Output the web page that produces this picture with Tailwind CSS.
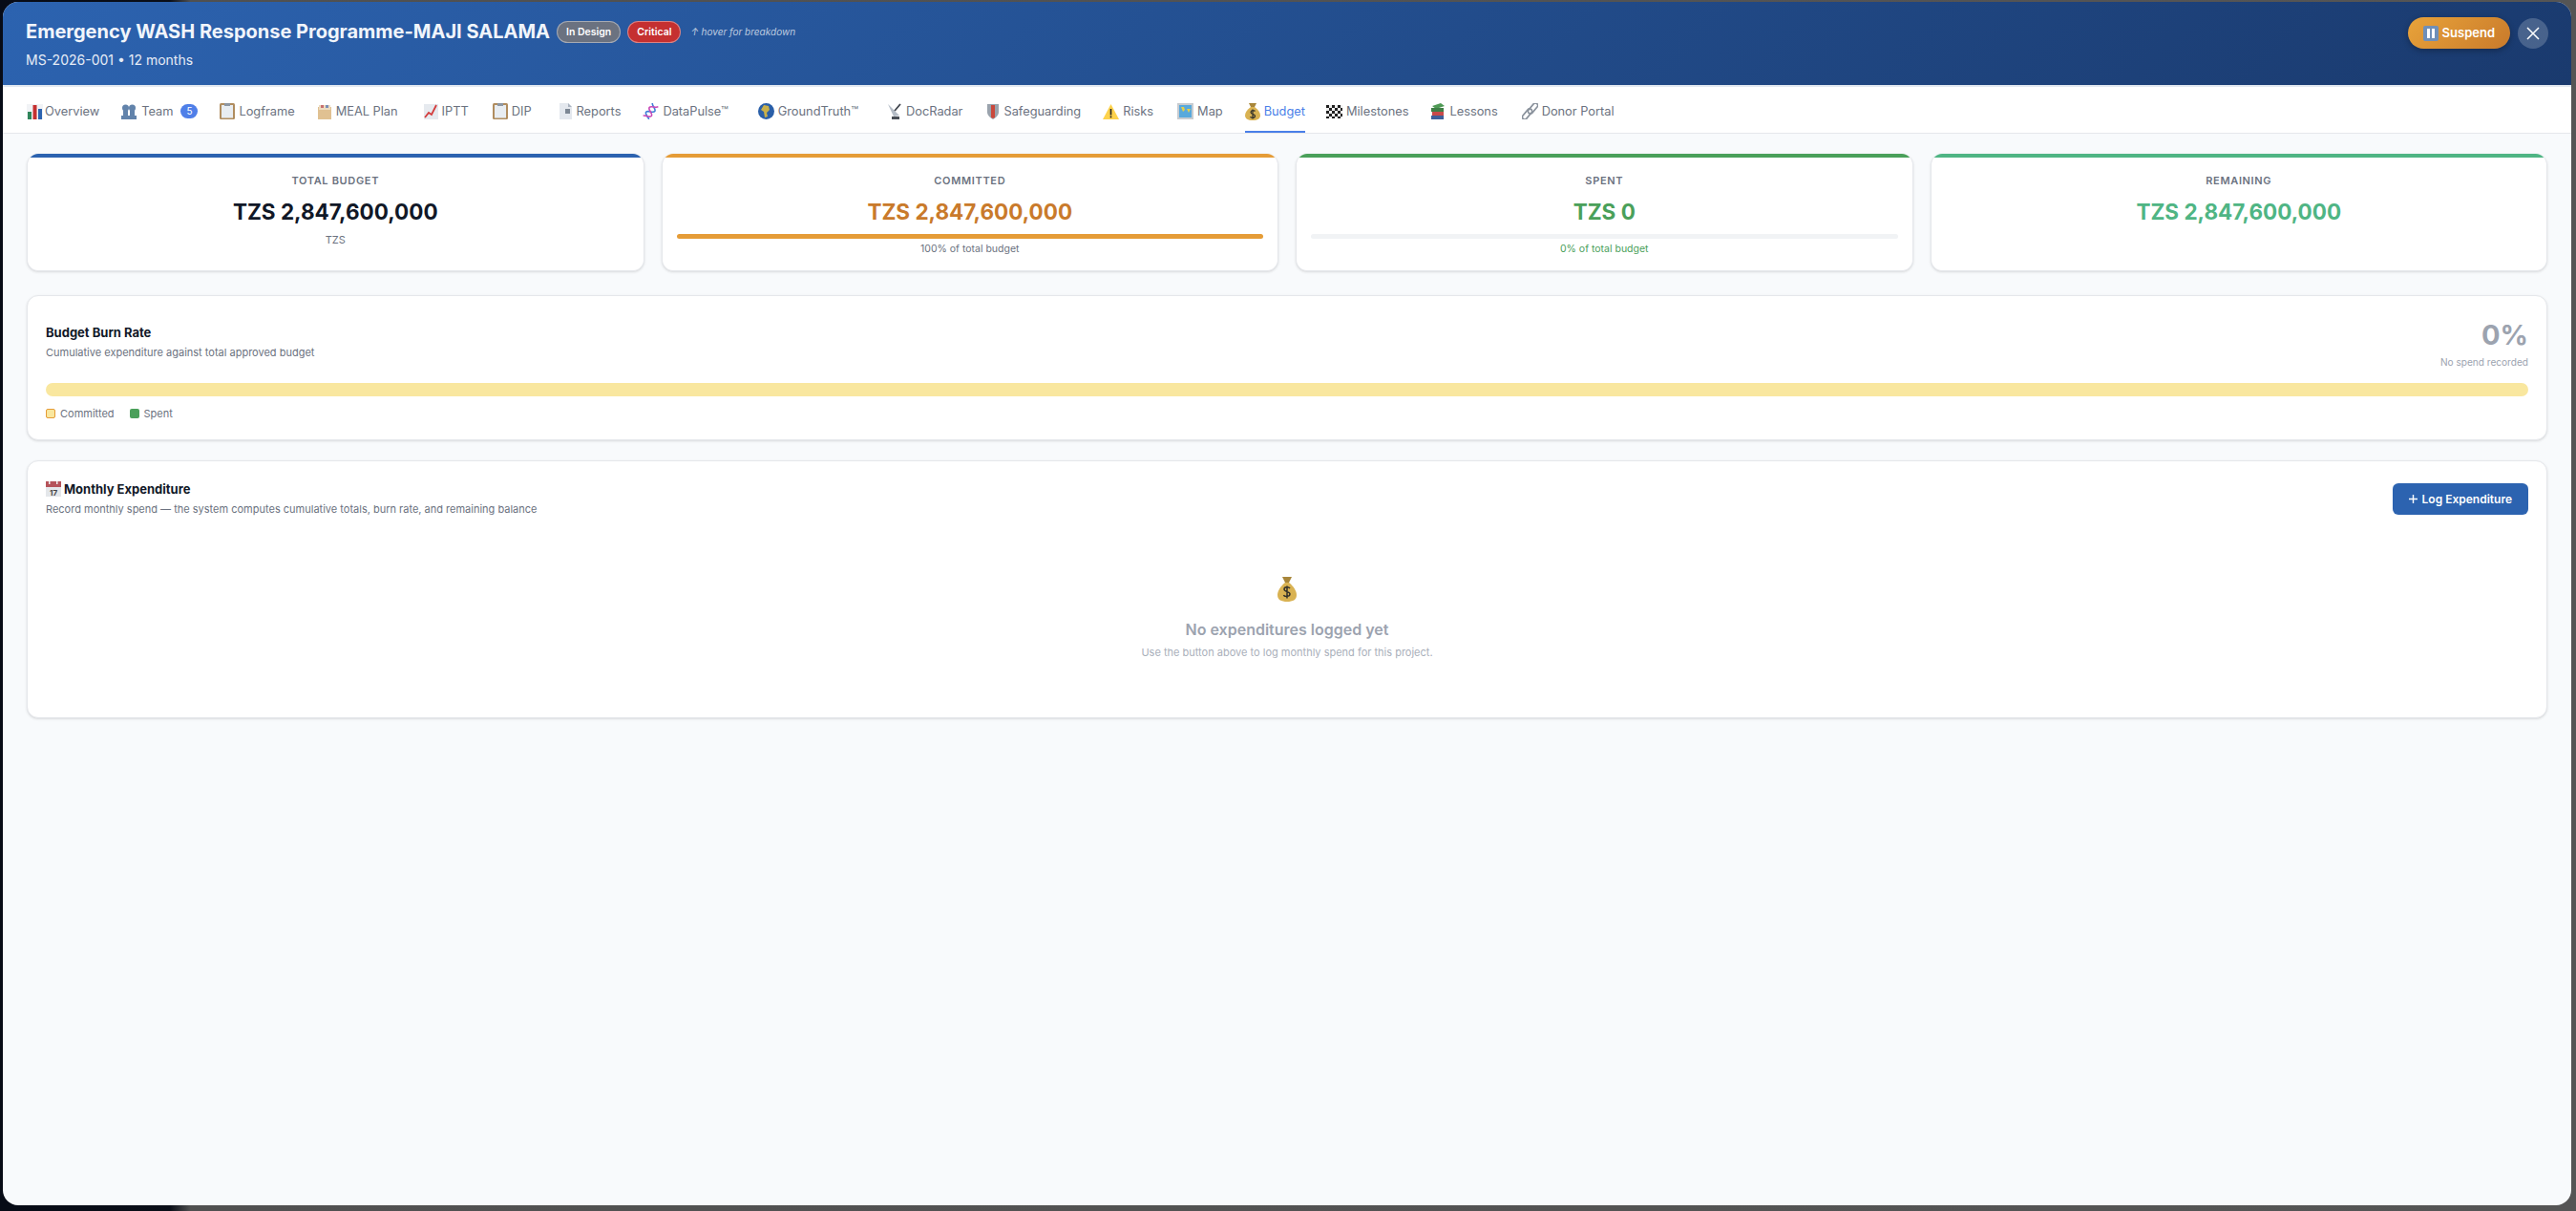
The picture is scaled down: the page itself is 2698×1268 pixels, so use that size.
<!DOCTYPE html>
<html lang="en">
  <head>
    <meta charset="UTF-8" />
    <title>Budget</title>
    <script src="https://cdn.jsdelivr.net/npm/@tailwindcss/browser@4"></script>
  </head>
  <body class="h-[1268px] w-[2698px] overflow-hidden bg-[linear-gradient(90deg,#070b16_0%,#0a0e18_6.6%,#505050_7.4%,#555555_100%)] font-['Inter',sans-serif]">
    <div class="ml-[3px] mt-[2px] flex h-[1260px] w-[2690px] flex-col overflow-hidden rounded-[16px] bg-[#f8fafc]">
      <!-- header -->
      <header class="flex h-[87px] shrink-0 items-start justify-between bg-[linear-gradient(135deg,#2c63b0_0%,#1a3a6e_100%)] pl-[24px] pr-[24px]">
        <div class="pt-[17px]">
          <div class="flex items-center">
            <h1 class="text-[20px] font-bold leading-[28px] text-[#f1f5fb]">Emergency WASH Response Programme-MAJI SALAMA</h1>
            <span class="ml-[7px] rounded-full border border-white/40 bg-[#6b7280] px-[9px] py-[3px] text-[10.5px] font-semibold leading-[15px] text-white">In Design</span>
            <span class="ml-[7px] rounded-full border border-white/40 bg-[#c53030] px-[9px] py-[3px] text-[10.5px] font-semibold leading-[15px] text-white">Critical</span>
            <span class="ml-[10px] text-[10px] italic text-white/70">↑ hover for breakdown</span>
          </div>
          <p class="mt-[6px] text-[14px] leading-[20px] text-[#e6ecf6]">MS-2026-001 • 12 months</p>
        </div>
        <div class="flex items-center gap-[8px] pt-[16px]">
          <button class="flex h-[33px] items-center gap-[4px] rounded-full bg-[linear-gradient(135deg,#e8a33a,#c97a2b)] px-[16px] text-[13px] font-semibold text-white shadow-[0_2px_6px_rgba(0,0,0,0.3)]">
            <svg class="h-[16px] w-[16px]" viewBox="0 0 16 16"><rect width="16" height="16" rx="2" fill="#6f8fb8"/><rect x="4" y="3" width="3" height="10" fill="#fff"/><rect x="9" y="3" width="3" height="10" fill="#fff"/></svg>
            Suspend
          </button>
          <button class="flex h-[32px] w-[32px] items-center justify-center rounded-full bg-white/20">
            <svg class="h-[14px] w-[14px]" viewBox="0 0 14 14" fill="none" stroke="#fff" stroke-width="1.5"><path d="M1 1l12 12M13 1L1 13"/></svg>
          </button>
        </div>
      </header>

      <!-- tabs -->
      <nav class="flex h-[51px] shrink-0 items-stretch gap-[25px] border-b border-b-[#e5e7eb] border-t-[2px] border-t-[#e2e8f0] bg-white pl-[25px] text-[12.8px] text-[#6b7280]">
        <a class="flex items-center gap-[2px] pt-[3px]">
          <svg class="h-[16px] w-[17px]" viewBox="0 0 17 16"><rect width="17" height="16" fill="#f1f3f6"/><rect x="1" y="8" width="4" height="8" fill="#2f855a"/><rect x="6.5" y="1" width="4" height="15" fill="#c53030"/><rect x="12" y="5" width="4" height="11" fill="#2c63b0"/></svg>
          Overview
        </a>
        <a class="ml-[-3px] flex items-center gap-[4px] pt-[3px]">
          <svg class="h-[16px] w-[18px]" viewBox="0 0 18 16" fill="#6283ab"><circle cx="5.5" cy="4" r="3.5"/><circle cx="12.5" cy="4" r="3.5"/><path d="M3 7h5v6H3zM10 7h5v6h-5zM1 12h16v4H1z"/></svg>
          Team
          <span class="ml-[4px] flex h-[15px] w-[18px] items-center justify-center rounded-full bg-[#4f7fe8] text-[10px] text-white">5</span>
        </a>
        <a class="ml-[-2px] flex items-center gap-[4px] pt-[3px]">
          <svg class="h-[17px] w-[16px]" viewBox="0 0 16 17"><rect width="16" height="17" rx="1.5" fill="#b08d5f"/><rect x="2" y="2" width="12" height="13.5" fill="#e8edf2"/><rect x="5" y="0" width="6" height="3" fill="#8d97a3"/></svg>
          Logframe
        </a>
        <a class="ml-[-2px] flex items-center gap-[4px] pt-[3px]">
          <svg class="h-[16px] w-[16px]" viewBox="0 0 16 16"><path d="M1 3h14v13H1z" fill="#e0c192"/><rect x="2" y="1" width="12" height="5" fill="#eddcc0"/><rect x="4" y="1" width="3" height="3" fill="#c87070"/><rect x="9" y="1" width="3" height="3" fill="#7a8fb8"/></svg>
          MEAL Plan
        </a>
        <a class="ml-[2px] flex items-center gap-[4px] pt-[3px]">
          <svg class="h-[16px] w-[15px]" viewBox="0 0 15 16"><rect width="15" height="16" fill="#e6eaef"/><path d="M1 14l4-5 3 2 5-10" fill="none" stroke="#d33c3c" stroke-width="1.8"/></svg>
          IPTT
        </a>
        <a class="flex items-center gap-[4px] pt-[3px]">
          <svg class="h-[17px] w-[16px]" viewBox="0 0 16 17"><rect width="16" height="17" rx="1.5" fill="#b08d5f"/><rect x="2" y="2" width="12" height="13.5" fill="#e8edf2"/><rect x="5" y="0" width="6" height="3" fill="#8d97a3"/></svg>
          DIP
        </a>
        <a class="ml-[3px] flex items-center gap-[4px] pt-[3px]">
          <svg class="h-[17px] w-[15px]" viewBox="0 0 15 17"><path d="M1 0h9l4 4v13H1z" fill="#e4e8ee"/><path d="M10 0l4 4h-4z" fill="#aab3bf"/><rect x="7" y="6" width="5" height="5" fill="#7d8794"/></svg>
          Reports
        </a>
        <a class="ml-[-2px] flex items-center gap-[4px] pt-[3px]">
          <svg class="h-[17px] w-[17px]" viewBox="0 0 17 17" fill="none" stroke-width="1.6"><g transform="rotate(35 8.5 8.5)"><path d="M5 0C5 3 12 3 12 6S5 9 5 12s7 3 7 5" stroke="#3f7fd8"/><path d="M12 0c0 3-7 3-7 6s7 3 7 6-7 3-7 5" stroke="#c84ab8"/></g></svg>
          DataPulse™
        </a>
        <a class="ml-[6px] flex items-center gap-[4px] pt-[3px]">
          <svg class="h-[17px] w-[17px]" viewBox="0 0 17 17"><circle cx="8.5" cy="8.5" r="8.5" fill="#2a5fa8"/><path d="M6 2l5 1 1 4-3 3 1 4-3 1-1-6-3-2z" fill="#c9b04a"/></svg>
          GroundTruth™
        </a>
        <a class="ml-[4px] flex items-center gap-[4px] pt-[3px]">
          <svg class="h-[17px] w-[17px]" viewBox="0 0 17 17" fill="none"><path d="M2 1l12 12-6 1z" fill="#b4bcc6"/><path d="M15 1L9 8" stroke="#3f444c" stroke-width="1.8"/><path d="M6 14h8v3H6z" fill="#4a4f57"/></svg>
          DocRadar
        </a>
        <a class="flex items-center gap-[4px] pt-[3px]">
          <svg class="h-[17px] w-[14px]" viewBox="0 0 14 17"><path d="M1 1h12v8c0 4-3 6-6 8-3-2-6-4-6-8z" fill="#9aa3ad"/><path d="M5 2h4v13l-2 1-2-1z" fill="#c9483c"/></svg>
          Safeguarding
        </a>
        <a class="ml-[-2px] flex items-center gap-[4px] pt-[3px]">
          <svg class="h-[16px] w-[17px]" viewBox="0 0 17 16"><path d="M8.5 0L17 16H0z" fill="#fdd24c"/><rect x="7.7" y="5" width="1.6" height="6.5" fill="#222"/><rect x="7.7" y="12.5" width="1.6" height="1.8" fill="#222"/></svg>
          Risks
        </a>
        <a class="flex items-center gap-[4px] pt-[3px]">
          <svg class="h-[17px] w-[17px]" viewBox="0 0 17 17"><rect width="17" height="17" fill="#c8ccd0"/><rect x="2" y="2" width="13" height="13" fill="#58a9dc"/><path d="M4 4h3l1 3-2 2zM10 6h4l-2 4z" fill="#e4cf4a"/></svg>
          Map
        </a>
        <a class="relative ml-[-2px] flex items-center gap-[4px] pt-[3px] text-[#4a7fe8] after:absolute after:bottom-0 after:left-0 after:h-[2px] after:w-full after:bg-[#4a7fe8]">
          <svg class="h-[18px] w-[16px]" viewBox="0 0 16 18"><path d="M4 0h8l-2 4H6z" fill="#a8863a"/><path d="M6 4h4c4 3 6 6 6 9 0 3-3 5-8 5s-8-2-8-5c0-3 2-6 6-9z" fill="#d9b252"/><path d="M10.5 8.5C10 7.5 6 7 6 9.5s4.5 1.5 4.5 4-4.500 2-5 .8M8 6.5v10" fill="none" stroke="#33312a" stroke-width="1.2"/></svg>
          Budget
        </a>
        <a class="ml-[-3px] flex items-center gap-[4px] pt-[3px]">
          <svg class="h-[14px] w-[17px]" viewBox="0 0 17 14"><rect width="17" height="14" fill="#eee"/><path d="M0 0h3v3H0zM6 0h3v3H6zM12 0h3v3h-3zM3 3h3v3H3zM9 3h3v3H9zM15 3h2v3h-2zM0 6h3v3H0zM6 6h3v3H6zM12 6h3v3h-3zM3 9h3v3H3zM9 9h3v3H9zM15 9h2v3h-2zM0 12h3v2H0zM6 12h3v2H6zM12 12h3v2h-3z" fill="#222"/></svg>
          Milestones
        </a>
        <a class="ml-[-2px] flex items-center gap-[4px] pt-[3px]">
          <svg class="h-[17px] w-[16px]" viewBox="0 0 16 17"><path d="M2 3l9-3 4 3-9 3z" fill="#4f9a55"/><rect x="1" y="5" width="13" height="4" fill="#3f7f46"/><rect x="2" y="9" width="12" height="4" fill="#c84a4a"/><rect x="1" y="13" width="13" height="4" fill="#3f5f9a"/></svg>
          Lessons
        </a>
        <a class="flex items-center gap-[4px] pt-[3px]">
          <svg class="h-[17px] w-[17px]" viewBox="0 0 17 17" fill="none" stroke="#8a929c" stroke-width="1.7"><rect x="-2.5" y="-6.5" width="5" height="13" rx="2.5" transform="translate(11.5 5.5) rotate(40)"/><rect x="-2.5" y="-6.5" width="5" height="13" rx="2.5" transform="translate(5.5 11.5) rotate(40)"/></svg>
          Donor Portal
        </a>
      </nav>

      <!-- content -->
      <main class="flex flex-col px-[25px] pt-[21px]">
        <div class="grid grid-cols-4 gap-[18px]">
          <div class="relative h-[123px] overflow-hidden rounded-[12px] border border-t-0 border-[#e5e7eb] bg-white pt-[20px] text-center shadow-sm before:absolute before:inset-x-0 before:top-0 before:h-[4px] before:bg-[#2c63b0]">
            <p class="text-[11px] font-semibold leading-[16px] tracking-[0.06em] text-[#6b7280]">TOTAL BUDGET</p>
            <p class="mt-[9px] text-[22.5px] font-bold leading-[32px] text-[#111827]">TZS 2,847,600,000</p>
            <p class="mt-[5px] text-[11px] leading-[16px] text-[#6b7280]">TZS</p>
          </div>
          <div class="relative h-[123px] overflow-hidden rounded-[12px] border border-t-0 border-[#e5e7eb] bg-white px-[15px] pt-[20px] text-center shadow-sm before:absolute before:inset-x-0 before:top-0 before:h-[4px] before:bg-[#e59c37]">
            <p class="text-[11px] font-semibold leading-[16px] tracking-[0.06em] text-[#6b7280]">COMMITTED</p>
            <p class="mt-[9px] text-[22.5px] font-bold leading-[32px] text-[#c97a2b]">TZS 2,847,600,000</p>
            <div class="mt-[7px] h-[5px] rounded-full bg-[#e59c37]"></div>
            <p class="mt-[3px] text-[10.5px] leading-[15px] text-[#6b7280]">100% of total budget</p>
          </div>
          <div class="relative h-[123px] overflow-hidden rounded-[12px] border border-t-0 border-[#e5e7eb] bg-white px-[15px] pt-[20px] text-center shadow-sm before:absolute before:inset-x-0 before:top-0 before:h-[4px] before:bg-[#4aa05a]">
            <p class="text-[11px] font-semibold leading-[16px] tracking-[0.06em] text-[#6b7280]">SPENT</p>
            <p class="mt-[9px] text-[22.5px] font-bold leading-[32px] text-[#4aa05a]">TZS 0</p>
            <div class="mt-[7px] h-[5px] rounded-full bg-[#f1f3f5]"></div>
            <p class="mt-[3px] text-[10.5px] leading-[15px] text-[#4aa05a]">0% of total budget</p>
          </div>
          <div class="relative h-[123px] overflow-hidden rounded-[12px] border border-t-0 border-[#e5e7eb] bg-white pt-[20px] text-center shadow-sm before:absolute before:inset-x-0 before:top-0 before:h-[4px] before:bg-[#4fb584]">
            <p class="text-[11px] font-semibold leading-[16px] tracking-[0.06em] text-[#6b7280]">REMAINING</p>
            <p class="mt-[9px] text-[22.5px] font-bold leading-[32px] text-[#4fb584]">TZS 2,847,600,000</p>
          </div>
        </div>

        <section class="mt-[25px] h-[152px] rounded-[12px] border border-[#e5e7eb] bg-white px-[19px] pt-[25px] shadow-sm">
          <div class="flex items-start justify-between">
            <div class="pt-[3px]">
              <h2 class="text-[13px] font-bold leading-[20px] text-[#111827]">Budget Burn Rate</h2>
              <p class="mt-[3px] text-[11px] leading-[16px] text-[#6b7280]">Cumulative expenditure against total approved budget</p>
            </div>
            <div class="text-right">
              <p class="text-[29px] font-bold leading-[32px] text-[#9ca3af]">0%</p>
              <p class="mt-[4px] text-[10.1px] leading-[16px] text-[#9ca3af]">No spend recorded</p>
            </div>
          </div>
          <div class="mt-[14px] h-[14px] rounded-full bg-[#f9e79f]"></div>
          <div class="mt-[10px] flex items-center gap-[16px] text-[11px] leading-[16px] text-[#6b7280]">
            <span class="flex items-center gap-[5px]"><i class="h-[10px] w-[10px] rounded-[2px] border border-[#e59c37] bg-[#f9e79f]"></i>Committed</span>
            <span class="flex items-center gap-[5px]"><i class="h-[10px] w-[10px] rounded-[2px] bg-[#4aa05a]"></i>Spent</span>
          </div>
        </section>

        <section class="mt-[21px] h-[270px] rounded-[12px] border border-[#e5e7eb] bg-white px-[19px] pt-[19px] shadow-sm">
          <div class="flex items-start justify-between">
            <div>
              <h2 class="flex items-center gap-[3px] text-[13px] font-bold leading-[20px] text-[#111827]">
                <svg class="h-[16px] w-[16px]" viewBox="0 0 16 16"><rect width="16" height="16" fill="#e4e7ea"/><rect width="16" height="6" fill="#b5535a"/><rect x="3" y="0" width="1.5" height="3" fill="#eee"/><rect x="11" y="0" width="1.5" height="3" fill="#eee"/><text x="8" y="14.5" font-size="8" text-anchor="middle" fill="#444">17</text></svg>
                Monthly Expenditure
              </h2>
              <p class="mt-[3px] text-[11px] leading-[16px] text-[#6b7280]">Record monthly spend — the system computes cumulative totals, burn rate, and remaining balance</p>
            </div>
            <button class="mt-[4px] flex h-[33px] items-center gap-[5px] rounded-[6px] bg-[#2c63b0] px-[17px] text-[12px] font-semibold text-white">
              <svg class="h-[9px] w-[9px]" viewBox="0 0 9 9" stroke="#fff" stroke-width="1.4"><path d="M4.5 0v9M0 4.5h9"/></svg>
              Log Expenditure
            </button>
          </div>
          <div class="mt-[63px] flex flex-col items-center text-center">
            <svg class="h-[26px] w-[20px]" viewBox="0 0 20 26"><path d="M5 0h10l-3 6H8z" fill="#a8863a"/><path d="M8 6h4c5 4 8 9 8 13 0 5-4 7-10 7S0 24 0 19C0 15 3 10 8 6z" fill="#d9b252"/><path d="M13 12c-1-1.5-6-2-6 1s6 2 6 5-6 3-6.5 1M10 9.5v13" fill="none" stroke="#33312a" stroke-width="1.5"/></svg>
            <p class="mt-[17px] text-[16px] font-semibold leading-[24px] text-[#9ca3af]">No expenditures logged yet</p>
            <p class="mt-[4px] text-[11px] leading-[16px] text-[#a9afba]">Use the button above to log monthly spend for this project.</p>
          </div>
        </section>
      </main>
    </div>
  </body>
</html>
